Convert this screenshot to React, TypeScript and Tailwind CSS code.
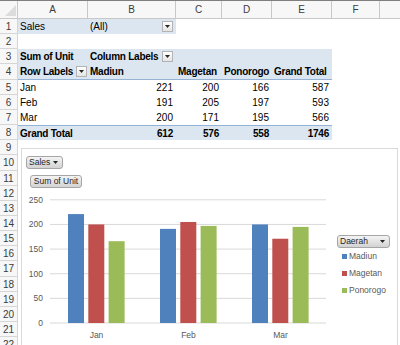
import React from 'react';

type Cell = {
  text?: string;
  bold?: boolean;
  right?: boolean;
  band?: boolean;
  drop?: string;
  line?: 'top' | 'bottom';
};

const WIDTHS = ['w-[70px]', 'w-[88px]', 'w-[46px]', 'w-[50px]', 'w-[60px]', 'w-[48px]'];
// G sits past the window's right edge, so its letter is not seen
const LETTERS = ['A', 'B', 'C', 'D', 'E', 'F', ''];

// row heights alternate 15/16px so that the rows land where Excel put them
const rowH = (n: number) => Math.round(19 + n * 15.15) - Math.round(19 + (n - 1) * 15.15);

const band = (text?: string, bold = false, drop?: string): Cell => ({ text, bold, band: true, drop });

const pivot: Record<number, Cell[]> = {
  1: [band('Sales'), band('(All)', false, 'mr-[3px]')],
  3: [band('Sum of Unit', true), band('Column Labels', true, 'mr-[3px]'), band(), band(), band()],
  4: [
    { ...band('Row Labels', true, 'mr-[1px]'), line: 'bottom' },
    { ...band('Madiun', true), line: 'bottom' },
    { ...band('Magetan', true), line: 'bottom' },
    { ...band('Ponorogo', true), line: 'bottom' },
    { ...band('Grand Total', true), line: 'bottom' },
  ],
  5: [{ text: 'Jan' }, { text: '221', right: true }, { text: '200', right: true }, { text: '166', right: true }, { text: '587', right: true }],
  6: [{ text: 'Feb' }, { text: '191', right: true }, { text: '205', right: true }, { text: '197', right: true }, { text: '593', right: true }],
  7: [{ text: 'Mar' }, { text: '200', right: true }, { text: '171', right: true }, { text: '195', right: true }, { text: '566', right: true }],
  8: ['Grand Total', '612', '576', '558', '1746'].map((t, i) => ({
    text: t,
    bold: true,
    band: true,
    right: i > 0,
    line: 'top' as const,
  })),
};

const Arrow = ({ className = '' }: { className?: string }) => (
  <svg width="5" height="3" viewBox="0 0 5 3" className={className}>
    <path d="M0 0h5L2.5 3z" fill="#262626" />
  </svg>
);

const CellDrop = ({ className }: { className: string }) => (
  <span className={`flex h-[11px] w-[11px] shrink-0 items-center justify-center border border-[#b3b3b3] bg-gradient-to-b from-white to-[#e4e4e4] ${className}`}>
    <Arrow />
  </span>
);

const FieldBtn = ({ label, arrow, className }: { label: string; arrow?: boolean; className: string }) => (
  <div
    className={`flex h-[13px] items-center whitespace-nowrap rounded-[3px] border border-[#a6a6a6] bg-gradient-to-b from-[#f4f4f4] to-[#d3d3d3] px-[2px] text-[8.5px] leading-none text-[#262626] ${
      arrow ? 'justify-between' : 'justify-center'
    } ${className}`}
  >
    <span>{label}</span>
    {arrow && <Arrow className="mr-[2px]" />}
  </div>
);

const SheetRow = ({ n }: { n: number }) => {
  const cells = pivot[n] || [];
  return (
    <div className={`flex ${rowH(n) === 16 ? 'h-[16px]' : 'h-[15px]'}`}>
      <div className="flex w-[18px] shrink-0 items-center justify-center border-b border-r border-[#d6d6d6] bg-[#f7f7f7] text-[10px] text-[#3b3b3b]">
        {n}
      </div>
      {WIDTHS.map((w, i) => {
        const c = cells[i];
        if (!c) return <div key={i} className={`${w} shrink-0`} />;
        return (
          <div
            key={i}
            className={`${w} flex shrink-0 items-center overflow-visible whitespace-nowrap ${c.band ? 'bg-[#dce6f1]' : ''} ${
              c.line === 'top' ? 'border-t border-[#95b3d7]' : c.line === 'bottom' ? 'border-b border-[#95b3d7]' : ''
            } ${c.right ? 'justify-end pr-[3px]' : c.drop ? 'justify-between pl-[2px]' : 'pl-[2px]'} ${
              c.bold ? 'font-bold tracking-[-0.25px]' : ''
            }`}
          >
            <span>{c.text}</span>
            {c.drop && <CellDrop className={c.drop} />}
          </div>
        );
      })}
      <div className="flex-1" />
    </div>
  );
};

const series = [
  { name: 'Madiun', color: '#4f81bd', values: [221, 191, 200] },
  { name: 'Magetan', color: '#c0504d', values: [200, 205, 171] },
  { name: 'Ponorogo', color: '#9bbb59', values: [166, 197, 195] },
];
const months = ['Jan', 'Feb', 'Mar'];
const yFor = (v: number) => 132 - v * 0.4928;

const Chart = () => (
  <div className="absolute left-[21px] top-[147px] h-[210px] w-[377px] border border-[#d9d9d9] bg-white">
    <div className="flex flex-col items-start pl-[4px] pt-[7px]">
      <FieldBtn label="Sales" arrow className="w-[37px]" />
      <FieldBtn label="Sum of Unit" className="ml-[4px] mt-[6px] w-[52px]" />
    </div>
    <div className="mt-[3px] flex">
      <svg width="309" height="160" className="shrink-0" fontFamily="'Liberation Sans', Arial, sans-serif" fontSize="8.5">
        {[0, 50, 100, 150, 200, 250].map((v) => (
          <g key={v}>
            <line x1="28" x2="304" y1={yFor(v)} y2={yFor(v)} stroke="#d9d9d9" strokeWidth="1" />
            <text x="21" y={yFor(v) + 3} textAnchor="end" fill="#595959">
              {v}
            </text>
          </g>
        ))}
        {months.map((m, gi) => (
          <g key={m}>
            {series.map((s, si) => (
              <rect
                key={s.name}
                x={46 + gi * 92 + si * 20.3}
                y={yFor(s.values[gi])}
                width="16"
                height={132 - yFor(s.values[gi])}
                fill={s.color}
              />
            ))}
            <text x={74.5 + gi * 92} y="147" textAnchor="middle" fill="#595959">
              {m}
            </text>
          </g>
        ))}
      </svg>
      <div className="flex flex-col pl-[6px] pt-[44px]">
        <FieldBtn label="Daerah" arrow className="w-[53px]" />
        {series.map((s) => (
          <div key={s.name} className="flex h-[17px] items-center pl-[5px] text-[8.5px] text-[#595959]">
            <span className="mr-[2px] h-[5px] w-[5px]" style={{ backgroundColor: s.color }} />
            {s.name}
          </div>
        ))}
      </div>
    </div>
  </div>
);

export default function App() {
  return (
    <div className="relative h-[345px] w-[400px] overflow-hidden border-t border-[#7f7f7f] bg-white font-['Liberation_Sans',Arial,sans-serif] text-[10px] text-black">
      <div className="flex h-[18px]">
        <div className="relative w-[18px] shrink-0 border-b border-r border-[#c8c8c8] bg-[#f7f7f7]">
          <svg width="11" height="11" viewBox="0 0 11 11" className="absolute bottom-[2px] right-[1px]">
            <path d="M11 0V11H0z" fill="#dcdcdc" />
          </svg>
        </div>
        {LETTERS.map((l, i) => (
          <div
            key={i}
            className={`${i < 6 ? WIDTHS[i] : 'w-[64px]'} flex shrink-0 items-center justify-center border-b border-r border-[#c8c8c8] bg-[#f7f7f7] text-[10px] text-[#3b3b3b]`}
          >
            {l}
          </div>
        ))}
      </div>
      {Array.from({ length: 22 }, (_, i) => (
        <SheetRow key={i} n={i + 1} />
      ))}
      <Chart />
    </div>
  );
}
